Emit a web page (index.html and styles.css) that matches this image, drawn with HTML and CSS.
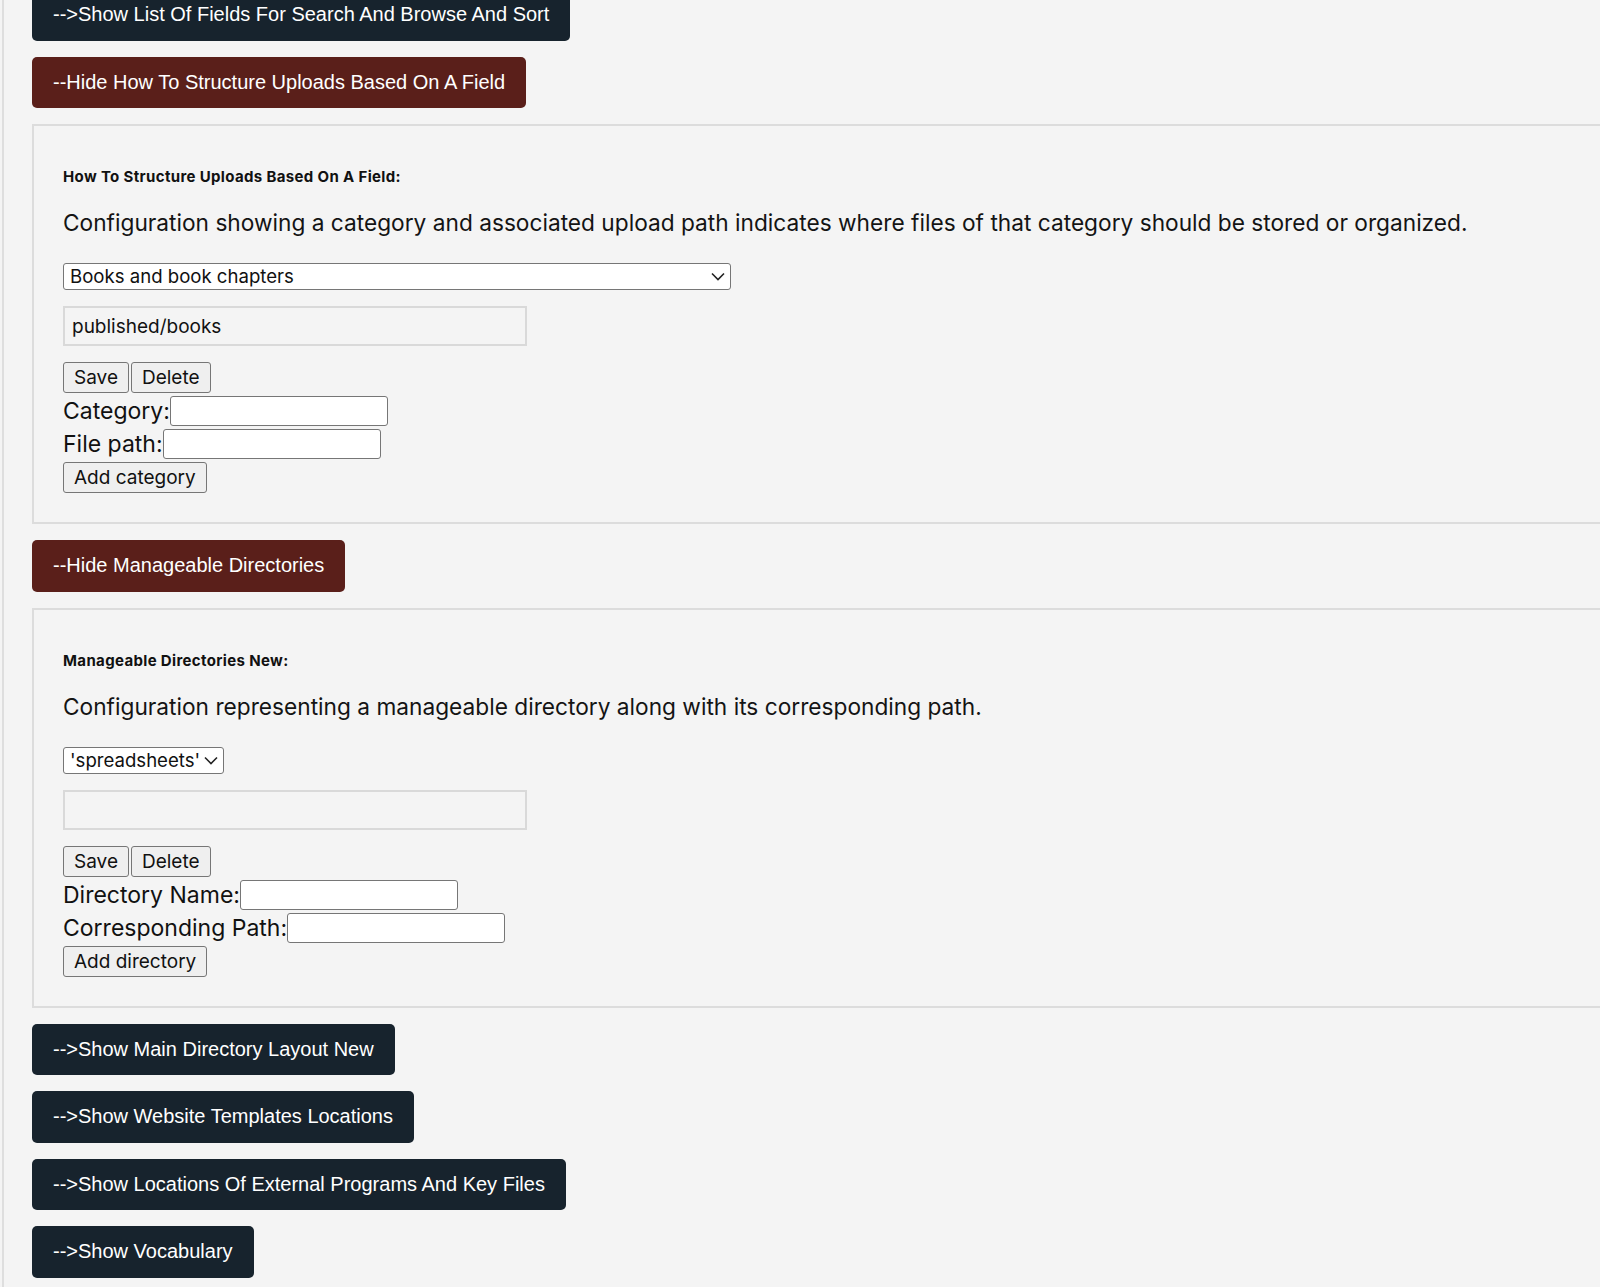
FILE: index.html
```html
<!DOCTYPE html>
<html>
<head>
<meta charset="utf-8">
<link rel="stylesheet" href="styles.css">
</head>
<body>
<div class="page">
  <button class="toggle show first">--&gt;Show List Of Fields For Search And Browse And Sort</button>
  <button class="toggle hide">--Hide How To Structure Uploads Based On A Field</button>
  <section class="panel">
    <h4 class="panel-title">How To Structure Uploads Based On A Field:</h4>
    <p class="panel-desc">Configuration showing a category and associated upload path indicates where files of that category should be stored or organized.</p>
    <div class="select-wrap wide">
      <select class="sel"><option>Books and book chapters</option></select>
      <svg class="chev" width="14" height="9" viewBox="0 0 14 9"><path d="M1 1.5 L7 7.5 L13 1.5" fill="none" stroke="#222" stroke-width="1.6"/></svg>
    </div>
    <input class="path" type="text" value="published/books" readonly>
    <div class="btn-row"><button class="sys">Save</button><button class="sys">Delete</button></div>
    <div class="field"><label>Category:</label><input class="txt" type="text"></div>
    <div class="field"><label>File path:</label><input class="txt" type="text"></div>
    <div class="btn-row"><button class="sys">Add category</button></div>
  </section>
  <button class="toggle hide">--Hide Manageable Directories</button>
  <section class="panel">
    <h4 class="panel-title">Manageable Directories New:</h4>
    <p class="panel-desc">Configuration representing a manageable directory along with its corresponding path.</p>
    <div class="select-wrap">
      <select class="sel"><option>'spreadsheets'</option></select>
      <svg class="chev" width="14" height="9" viewBox="0 0 14 9"><path d="M1 1.5 L7 7.5 L13 1.5" fill="none" stroke="#222" stroke-width="1.6"/></svg>
    </div>
    <input class="path" type="text" value="" readonly>
    <div class="btn-row"><button class="sys">Save</button><button class="sys">Delete</button></div>
    <div class="field"><label>Directory Name:</label><input class="txt" type="text"></div>
    <div class="field"><label>Corresponding Path:</label><input class="txt" type="text"></div>
    <div class="btn-row"><button class="sys">Add directory</button></div>
  </section>
  <button class="toggle show">--&gt;Show Main Directory Layout New</button>
  <button class="toggle show">--&gt;Show Website Templates Locations</button>
  <button class="toggle show">--&gt;Show Locations Of External Programs And Key Files</button>
  <button class="toggle show">--&gt;Show Vocabulary</button>
</div>
</body>
</html>
```
FILE: styles.css
```css
html, body {
  margin: 0;
  padding: 0;
  background: #f4f4f4;
  overflow: hidden;
}
.page {
  margin-left: 2px;
  border-left: 2px solid #dedede;
  padding-left: 28px;
  min-height: 1400px;
  display: flex;
  flex-direction: column;
  align-items: flex-start;
  gap: 16px;
}
.toggle {
  font-family: "Liberation Sans", Arial, sans-serif;
  font-size: 20px;
  line-height: 23px;
  color: #ffffff;
  border: none;
  border-radius: 5px;
  padding: 14px 21px 14.5px;
  cursor: pointer;
}
.toggle.first { margin-top: -11px; }
.toggle.show { background: #17232d; }
.toggle.hide { background: #5a1f1a; }
.panel {
  box-sizing: border-box;
  width: 1620px;
  border: 2px solid #dcdcdc;
  padding: 42px 29px 29px;
  display: flex;
  flex-direction: column;
  align-items: flex-start;
  font-family: Inter, "Open Sans", sans-serif;
  color: #111;
}
.panel-title {
  margin: 0;
  font-size: 15px;
  line-height: 17px;
  font-weight: 700;
  font-family: Inter, sans-serif;
  letter-spacing: 0.35px;
}
.panel-desc {
  margin: 24px 0 0;
  font-size: 22.7px;
  line-height: 28px;
  color: #141414;
}
.select-wrap {
  position: relative;
  margin-top: 26px;
}
.sel {
  appearance: none;
  -webkit-appearance: none;
  font-family: Inter, sans-serif;
  font-size: 18.6px;
  line-height: 23px;
  height: 27px;
  padding: 0 22px 0 6px;
  border: 1px solid #767676;
  border-radius: 3px;
  background: #ffffff;
  color: #111;
}
.select-wrap.wide .sel { width: 668px; padding-right: 30px; }
.chev {
  position: absolute;
  right: 6px;
  top: 9px;
  pointer-events: none;
}
.path {
  box-sizing: border-box;
  margin-top: 16px;
  width: 464px;
  height: 40px;
  border: 2px solid #d9d9d9;
  background: #f4f4f4;
  font-family: Inter, sans-serif;
  font-size: 19px;
  padding: 0 7px;
  color: #111;
  outline: none;
}
.btn-row {
  display: flex;
  gap: 2px;
  margin-top: 16px;
}
.field + .btn-row { margin-top: 3px; }
.sys {
  font-family: Inter, sans-serif;
  font-size: 19px;
  line-height: 23px;
  height: 31px;
  padding: 0 10px;
  background: #efefef;
  border: 1px solid #767676;
  border-radius: 3px;
  color: #111;
}
.sys.wide-text { padding: 0 9px; }
.field {
  display: flex;
  align-items: center;
  margin-top: 3px;
  font-size: 23px;
  height: 30px;
}
.field label { color: #111; }
.txt {
  box-sizing: border-box;
  width: 218px;
  height: 30px;
  border: 1px solid #767676;
  border-radius: 3px;
  background: #ffffff;
  margin: 0;
}
```
